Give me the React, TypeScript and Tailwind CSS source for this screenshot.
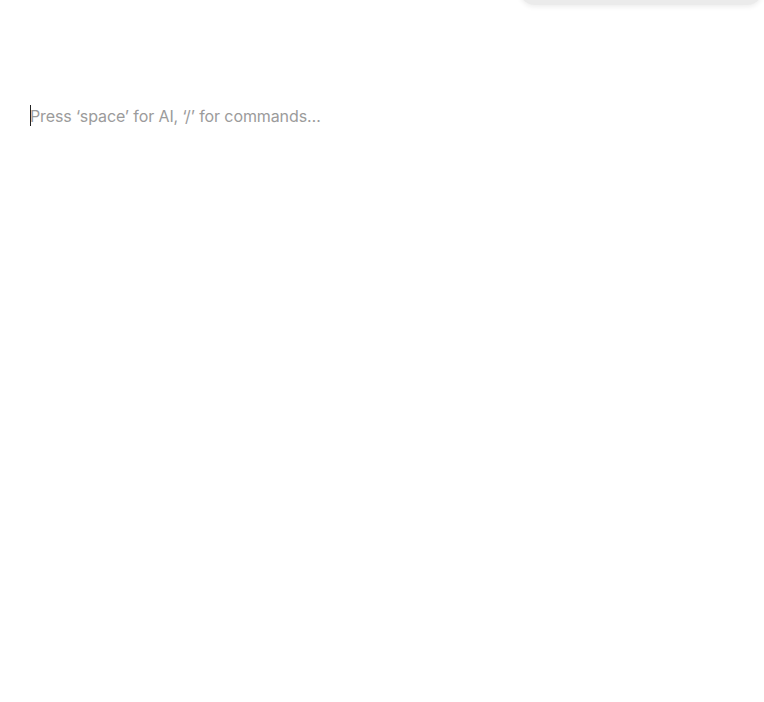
export default function App() {
  return (
    <div className="relative h-[702px] w-full overflow-hidden bg-white font-['Inter',sans-serif]">
      {/* popover hanging from above, only its bottom edge is visible */}
      <div className="absolute -top-10 left-[519px] right-[1px] h-[45px] rounded-2xl bg-[#ebebeb] shadow-[0_2px_5px_rgba(0,0,0,0.07)]" />

      <div className="px-[30px] pt-[105px]">
        <div className="relative flex items-center h-[22px] text-[16px] leading-[22px] tracking-[-0.1px] text-[#9b9b9b]">
          <span className="absolute left-0 top-0 h-[21px] w-px bg-[#222]" />
          <span>Press ‘space’ for AI, ‘/’ for commands…</span>
        </div>
      </div>
    </div>
  );
}
